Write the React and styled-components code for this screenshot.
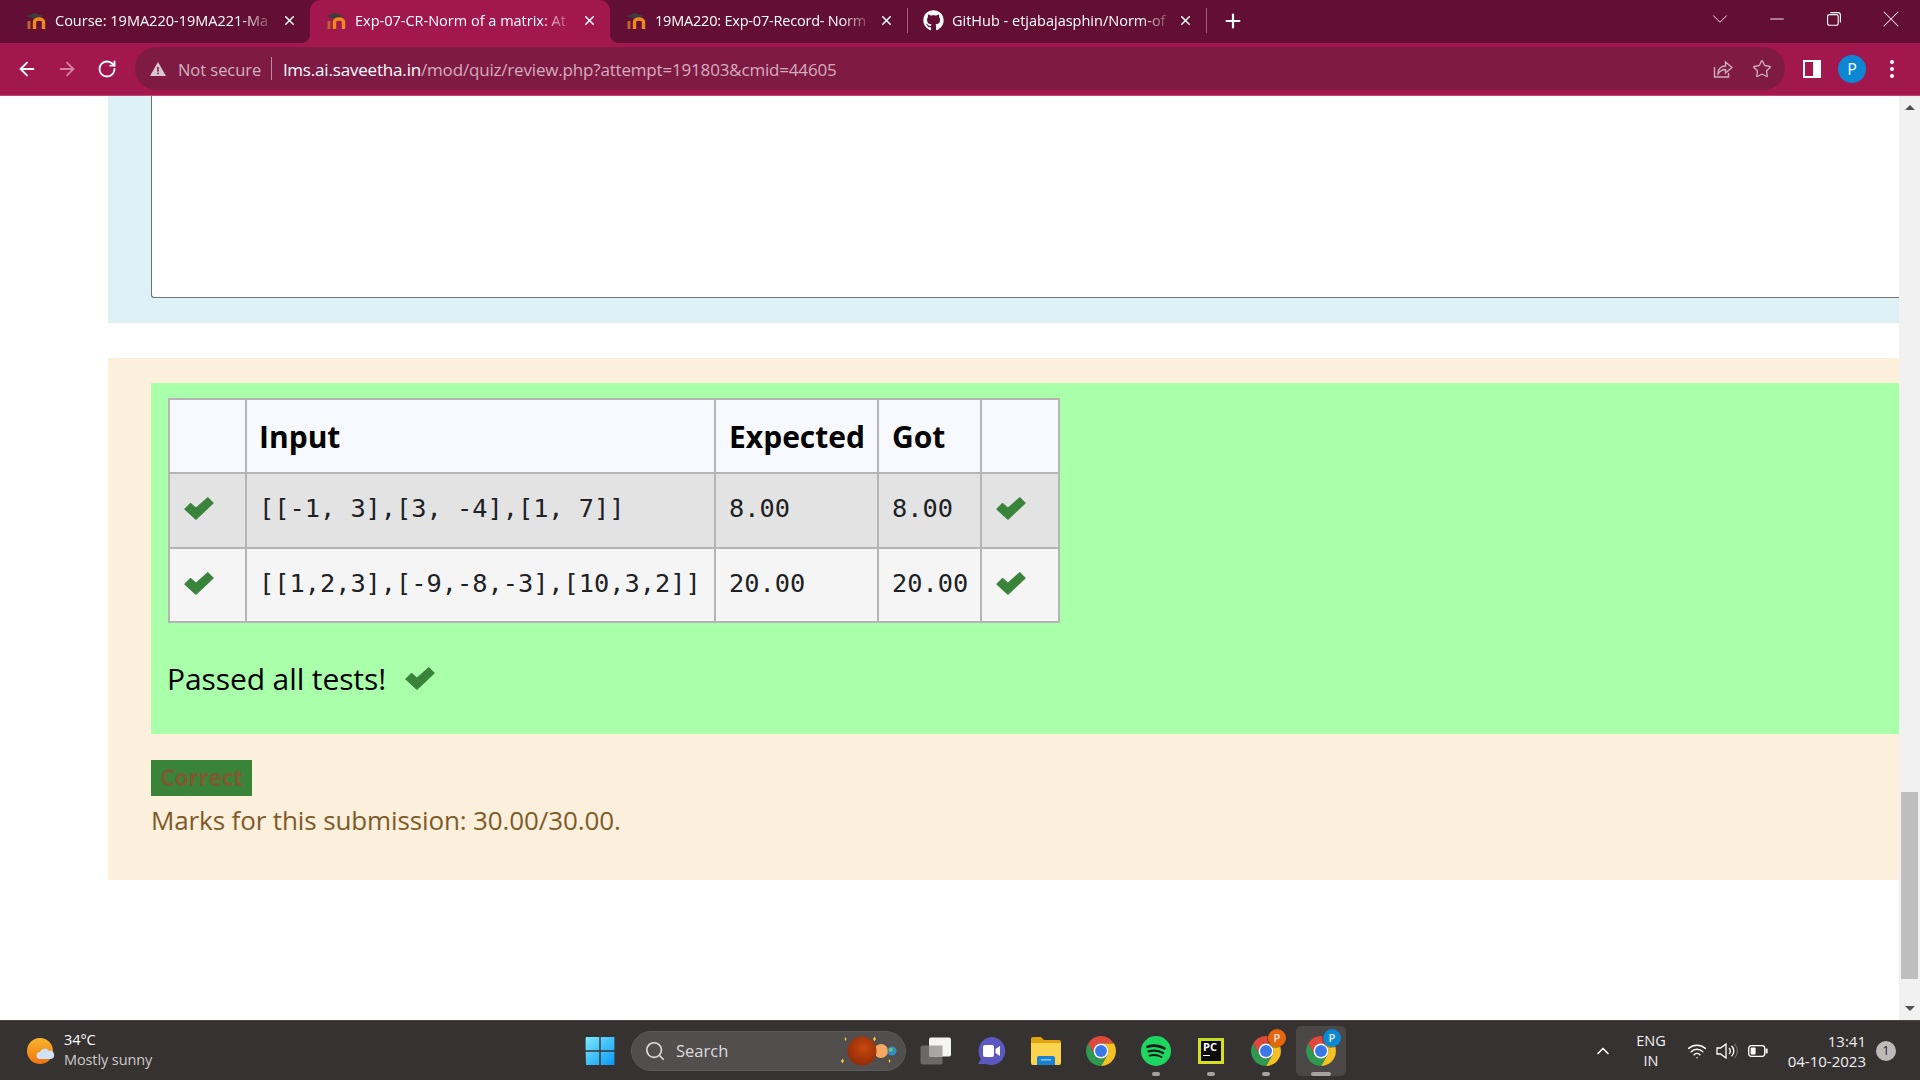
import React from 'react';
import styled, {createGlobalStyle} from 'styled-components';
import {FaGithub} from 'react-icons/fa';
import {ArrowLeft, ArrowRight, RotateCw, Star, Plus, X, ChevronDown, ChevronUp, Minus, Search, Wifi} from 'lucide-react';

const UI_FONT = '"Open Sans", "Noto Sans", sans-serif';

const GlobalStyle = createGlobalStyle`
html, body { margin: 0; padding: 0; background: #fff; overflow: hidden; }
* { box-sizing: border-box; }
body { font-family: ${UI_FONT}; }
`;

const Screen = styled.div`
width: 1920px;
height: 1080px;
display: flex;
flex-direction: column;
overflow: hidden;
`;

/* browser tab strip */
const TabStrip = styled.div`
height: 43px;
background: #630e34;
display: flex;
align-items: stretch;
padding-left: 10px;
flex: none;
`;

const Tab = styled.div`
position: relative;
width: ${p => p.$width}px;
display: flex;
align-items: center;
padding: 0 13px 2px 15px;
gap: 8px;
color: #fff;
border-radius: 10px 10px 0 0;
background: ${p => (p.$active ? '#a3174f' : 'transparent')};
svg:last-child { margin-left: auto; }
${p => p.$active && `
&::before, &::after {
  content: "";
  position: absolute;
  bottom: 0;
  width: 10px;
  height: 10px;
}
&::before { left: -10px; background: radial-gradient(circle at 0 0, transparent 10px, #a3174f 10.5px); }
&::after { right: -10px; background: radial-gradient(circle at 100% 0, transparent 10px, #a3174f 10.5px); }
`}
`;

const TabTitle = styled.span`
flex: none;
font-size: 14.5px;
letter-spacing: ${p => (p.$tight ? '-0.2px' : '0')};
white-space: nowrap;
-webkit-mask-image: linear-gradient(to right, #000 88%, rgba(0, 0, 0, .25) 100%);
mask-image: linear-gradient(to right, #000 88%, rgba(0, 0, 0, .25) 100%);
`;

const TabDivider = styled.div`
width: 1px;
height: 25px;
align-self: center;
margin-top: -2px;
background: #a8607f;
flex: none;
`;

const NewTab = styled.div`
width: 52px;
display: flex;
align-items: center;
justify-content: center;
color: #fff;
padding-bottom: 2px;
flex: none;
`;

const WindowControls = styled.div`
margin-left: auto;
display: flex;
align-items: center;
padding-bottom: 6px;
color: #f2dfe7;
`;

const WindowButton = styled.div`
width: ${p => p.$width || 57}px;
display: flex;
justify-content: center;
`;

/* toolbar with the address bar */
const Toolbar = styled.div`
height: 53px;
background: #a3174f;
border-bottom: 1px solid #c0447a;
display: flex;
align-items: center;
padding: 0 0 1px 7px;
flex: none;
`;

const NavButton = styled.div`
width: 40px;
display: flex;
justify-content: center;
align-items: center;
color: ${p => (p.$dim ? '#d57fa3' : '#fff')};
flex: none;
`;

const AddressBar = styled.div`
width: 1650px;
height: 43px;
margin: 0 7px 0 8px;
background: #7f1a45;
border-radius: 22px;
display: flex;
align-items: center;
padding: 0 13px 0 14px;
flex: none;
`;

const NotSecure = styled.span`
color: #cfb3bf;
font-size: 16.5px;
letter-spacing: -0.05px;
margin: 1px 0 0 11px;
`;

const AddressDivider = styled.div`
width: 1px;
height: 23px;
background: #b98aa0;
margin: 0 11px 0 10px;
`;

const Url = styled.div`
font-size: 17px;
letter-spacing: -0.18px;
margin-top: 1px;
color: #d4adbe;
white-space: nowrap;
flex: 1;
b { font-weight: 400; color: #fff; }
`;

const BarIcons = styled.div`
display: flex;
align-items: center;
gap: 19px;
color: #cbb0bc;
`;

const Avatar = styled.div`
width: 28px;
height: 28px;
border-radius: 50%;
background: #0b87d4;
color: #fff;
font-size: 16px;
display: flex;
align-items: center;
justify-content: center;
`;

const MenuDots = styled.div`
display: flex;
flex-direction: column;
gap: 3px;
span { width: 4px; height: 4px; border-radius: 50%; background: #fff; }
`;

/* page area */
const PageArea = styled.div`
flex: 1;
min-height: 0;
display: flex;
background: #fff;
`;

const Content = styled.main`
flex: 1;
min-width: 0;
padding-left: 108px;
`;

const InfoPanel = styled.section`
height: 227px;
background: #def1f7;
padding: 0 0 25px 43px;
`;

const AnswerBox = styled.div`
height: 100%;
background: #fff;
border-left: 1px solid #6f6f6f;
border-bottom: 1px solid #6f6f6f;
border-bottom-left-radius: 3px;
`;

const FeedbackPanel = styled.section`
margin-top: 35px;
height: 522px;
background: #fcefdc;
padding: 25px 0 0 43px;
`;

const ResultBox = styled.div`
height: 351px;
background: #aaffaa;
padding: 15px 0 0 17px;
`;

const ResultTable = styled.table`
width: 890px;
table-layout: fixed;
border-collapse: collapse;
`;

const HeadCell = styled.th`
height: 74px;
border: 2px solid #b5b5b5;
background: #f8f9ff;
text-align: left;
padding: 0 0 0 ${p => p.$pad || 13}px;
font-size: 30px;
font-weight: 700;
color: #000;
`;

const Row = styled.tr`
height: ${p => (p.$odd ? 75 : 74)}px;
background: ${p => (p.$odd ? '#e3e3e3' : '#f5f5f5')};
`;

const CodeCell = styled.td`
border: 2px solid #b5b5b5;
padding: 0 0 4px ${p => p.$pad || 13}px;
font-family: "DejaVu Sans Mono", "Liberation Mono", monospace;
font-size: 25.3px;
white-space: nowrap;
color: #1d2125;
`;

const MarkCell = styled.td`
border: 2px solid #b5b5b5;
padding: 0 0 4px 14px;
line-height: 0;
color: #3a833a;
`;

const Passed = styled.div`
display: flex;
align-items: center;
gap: 19px;
height: 42px;
margin-top: 34px;
margin-left: -1px;
font-size: 30px;
letter-spacing: -0.1px;
color: #000;
svg { color: #3a833a; }
`;

const Badge = styled.div`
width: 101px;
height: 36px;
margin-top: 26px;
background: #398439;
color: #7e5a31;
font-size: 23px;
font-weight: 700;
letter-spacing: -0.4px;
line-height: 35px;
text-align: center;
`;

const Marks = styled.div`
font-size: 26px;
letter-spacing: -0.12px;
line-height: 48px;
color: #7f5a29;
`;

/* scrollbar */
const Scrollbar = styled.div`
width: 21px;
background: #f1f1f1;
display: flex;
flex-direction: column;
align-items: center;
flex: none;
`;

const ScrollArrow = styled.div`
width: 0;
height: 0;
margin: ${p => (p.$down ? '27px 0 9px' : '9px 0 0')};
border-left: 5px solid transparent;
border-right: 5px solid transparent;
${p => (p.$down ? 'border-top: 5px solid #505050;' : 'border-bottom: 5px solid #505050;')}
`;

const ScrollThumb = styled.div`
width: 17px;
height: 187px;
margin-top: 682px;
background: #bebebe;
`;

/* windows taskbar */
const Taskbar = styled.footer`
height: 60px;
background: #363231;
border-top: 1px solid #4a4645;
display: flex;
align-items: center;
flex: none;
color: #fff;
`;

const Weather = styled.div`
width: 572px;
padding-left: 26px;
display: flex;
align-items: center;
gap: 8px;
flex: none;
`;

const WeatherText = styled.div`
font-size: 14.5px;
line-height: 20px;
letter-spacing: -0.1px;
margin-top: -2px;
span { display: block; }
span + span { color: #cdcbcb; }
`;

const TaskItem = styled.div`
position: relative;
width: ${p => (p.$active ? 50 : 55)}px;
height: 50px;
margin: ${p => (p.$active ? '0 2.5px' : '0')};
display: flex;
align-items: center;
justify-content: center;
flex: none;
border-radius: 5px;
background: ${p => (p.$active ? '#4a4746' : 'transparent')};
`;

const RunDot = styled.span`
position: absolute;
left: 50%;
bottom: 0;
transform: translateX(-50%);
width: ${p => (p.$wide ? 20 : 8)}px;
height: 4px;
border-radius: 2px;
background: #a5a3a2;
`;

const ProfilePip = styled.span`
position: absolute;
top: 3px;
left: 50%;
margin-left: 2px;
width: 18px;
height: 18px;
border-radius: 50%;
background: ${p => p.$color};
color: #eee;
font-size: 11px;
font-weight: 600;
line-height: 18px;
text-align: center;
box-shadow: -1px 1px 0 rgba(0, 0, 0, .3);
`;

const SearchPill = styled.div`
width: 275px;
height: 40px;
margin: 0 2.5px 0 4px;
border-radius: 20px;
background: #514e4d;
border: 1px solid #5c5958;
display: flex;
align-items: center;
padding: 0 7px 0 12px;
color: #dcdcdc;
font-size: 16.5px;
flex: none;
span { margin-left: 10px; flex: 1; }
`;

const Tray = styled.div`
margin-left: auto;
display: flex;
align-items: center;
padding-right: 24px;
`;

const TrayIcon = styled.div`
width: ${p => p.$width}px;
display: flex;
justify-content: center;
align-items: center;
color: #fff;
flex: none;
`;

const Lang = styled.div`
width: 52px;
text-align: center;
font-size: 14.5px;
line-height: 20px;
color: #f0f0f0;
flex: none;
margin-right: 5px;
`;

const Clock = styled.div`
width: 92px;
text-align: right;
font-size: 15px;
line-height: 20px;
color: #f0f0f0;
flex: none;
`;

const Notify = styled.div`
width: 20px;
height: 20px;
margin-left: 10px;
border-radius: 50%;
background: #bdbab9;
color: #222;
font-size: 12px;
text-align: center;
line-height: 20px;
flex: none;
`;

function CheckMark() {
    return (
        <svg width="30" height="23" viewBox="0 0 88 68" fill="currentColor" stroke="currentColor" strokeWidth="3" strokeLinejoin="round">
            <path d="M2 36 L19 19 L35 33 L70 2 L86 18 L35 66Z"/>
        </svg>
    );
}

function MoodleIcon() {
    return (
        <svg width="22" height="20" viewBox="0 0 22 20" fill="none">
            <path d="M1 5 L10 2 L19 5 L10 8Z" fill="#3c3c3c"/>
            <path d="M4 18 V10" stroke="#b9662a" strokeWidth="3"/>
            <path d="M9.5 18 V11 C9.5 7 18.5 7 18.5 11 V18" stroke="#f08a1d" strokeWidth="3.4"/>
        </svg>
    );
}

function WarningIcon() {
    return (
        <svg width="18" height="16" viewBox="0 0 18 16">
            <path d="M9 1 L17 15 H1Z" fill="#d9c7cf"/>
            <rect x="8.2" y="6" width="1.6" height="4.6" fill="#7f1a45"/>
            <rect x="8.2" y="11.6" width="1.6" height="1.6" fill="#7f1a45"/>
        </svg>
    );
}

function ShareIcon() {
    return (
        <svg width="20" height="20" viewBox="0 0 20 20" fill="none" stroke="#cbb0bc" strokeWidth="1.4">
            <path d="M1.5 8 V18 H15.5 V14"/>
            <path d="M5 15 C5 9 9 7 12.5 7 V3 L19 8.5 L12.5 14 V10.5 C9 10.5 7 12 5 15Z"/>
        </svg>
    );
}

function RestoreIcon() {
    return (
        <svg width="14" height="14" viewBox="0 0 14 14" fill="none" stroke="#fff" strokeWidth="1.1">
            <rect x="0.6" y="2.6" width="10.6" height="10.6" rx="2"/>
            <path d="M3.4 0.6 H11 a2.4 2.4 0 0 1 2.4 2.4 V10.6"/>
        </svg>
    );
}

function SidePanelIcon() {
    return (
        <svg width="18" height="18" viewBox="0 0 18 18">
            <rect width="18" height="18" fill="#fff"/>
            <rect x="2" y="2" width="8" height="14" fill="#a3174f"/>
        </svg>
    );
}

function WeatherIcon() {
    return (
        <svg width="30" height="30" viewBox="0 0 30 30">
            <defs>
                <linearGradient id="sun" x1="0" y1="0" x2="0" y2="1">
                    <stop offset="0" stopColor="#f7b52c"/>
                    <stop offset="1" stopColor="#f1750f"/>
                </linearGradient>
            </defs>
            <circle cx="14" cy="15" r="13" fill="url(#sun)"/>
            <path d="M13 23 a3.6 3.6 0 0 1 1 -7 a5 5 0 0 1 9 -1 a4 4 0 0 1 2 8Z" fill="#cfe2f7"/>
        </svg>
    );
}

function WindowsLogo() {
    return (
        <svg width="30" height="30" viewBox="0 0 30 30">
            <defs>
                <linearGradient id="win" x1="0" y1="0" x2="1" y2="1">
                    <stop offset="0" stopColor="#7de8ff"/>
                    <stop offset="1" stopColor="#0a98f5"/>
                </linearGradient>
            </defs>
            <path d="M1 1 H14.3 V14.3 H0.6 V2Z M15.7 1 H29.4 V14.3 H15.7Z M0.6 15.7 H14.3 V29 H1Z M15.7 15.7 H29.4 V29 H15.7Z" fill="url(#win)"/>
        </svg>
    );
}

function PlanetsIcon() {
    return (
        <svg width="60" height="32" viewBox="0 0 60 32">
            <defs>
                <radialGradient id="mars" cx="0.55" cy="0.4" r="0.65">
                    <stop offset="0" stopColor="#c8470f"/>
                    <stop offset="1" stopColor="#8f2a06"/>
                </radialGradient>
            </defs>
            <circle cx="43" cy="16" r="7" fill="#f5a864"/>
            <circle cx="54" cy="16" r="4.5" fill="#2f8fc4"/>
            <circle cx="52.8" cy="14.8" r="2" fill="#6fc06a"/>
            <circle cx="24" cy="16" r="14.5" fill="url(#mars)"/>
            <path d="M3 26 l1.5 -2.5 l1.5 2.5 l-1.5 2.5Z M6.5 4 l1 -2 l1 2 l-1 2Z M35 4 l1.5 -2.5 l1.5 2.5 l-1.5 2.5Z M50.5 26 l1 -2 l1 2 l-1 2Z" fill="#f1c63a"/>
        </svg>
    );
}

function TaskViewIcon() {
    return (
        <svg width="32" height="28" viewBox="0 0 32 28">
            <rect x="0.5" y="8.5" width="22" height="19" rx="2" fill="#6b6867"/>
            <rect x="9" y="0.5" width="22" height="19" rx="2" fill="#f4f4f4"/>
            <rect x="9" y="8.5" width="13.5" height="11" fill="#a9a7a6"/>
        </svg>
    );
}

function ChatIcon() {
    return (
        <svg width="30" height="30" viewBox="0 0 30 30">
            <path d="M15 1 a14 14 0 1 1 -5 27 H2 l3 -5 A14 14 0 0 1 15 1Z" fill="#5d58c0"/>
            <rect x="7" y="9" width="11" height="12" rx="2" fill="#fff"/>
            <path d="M19.5 13 L24 10 V20 L19.5 17Z" fill="#fff"/>
        </svg>
    );
}

function FolderIcon() {
    return (
        <svg width="30" height="28" viewBox="0 0 30 28">
            <path d="M0 2 a2 2 0 0 1 2 -2 H10 L13 3 H28 a2 2 0 0 1 2 2 V8 H0Z" fill="#e2a312"/>
            <path d="M0 6 H30 V26 a2 2 0 0 1 -2 2 H2 a2 2 0 0 1 -2 -2Z" fill="#fbd44f"/>
            <path d="M6 28 V21 a2 2 0 0 1 2 -2 H22 a2 2 0 0 1 2 2 V28Z" fill="#1a81d0"/>
            <rect x="10" y="22" width="10" height="1.6" fill="#7cc1f0"/>
        </svg>
    );
}

function ChromeIcon() {
    return (
        <svg width="30" height="30" viewBox="4 4 40 40">
            <path d="M6.68 14 A20 20 0 0 1 41.32 14 H24 A10 10 0 0 0 15.34 29Z" fill="#dd4a3d"/>
            <path d="M41.32 14 A20 20 0 0 1 24 44 L32.66 29 A10 10 0 0 0 24 14Z" fill="#f4c022"/>
            <path d="M24 44 A20 20 0 0 1 6.68 14 L15.34 29 A10 10 0 0 0 32.66 29Z" fill="#2f9a4f"/>
            <circle cx="24" cy="24" r="10" fill="#fff"/>
            <circle cx="24" cy="24" r="8" fill="#3b78e7"/>
        </svg>
    );
}

function SpotifyIcon() {
    return (
        <svg width="30" height="30" viewBox="0 0 30 30" fill="none" stroke="#1a1a1a" strokeLinecap="round">
            <circle cx="15" cy="15" r="15" fill="#1ed760" stroke="none"/>
            <path d="M6.5 10.8 C12 9 18.5 9.6 23.5 12.4" strokeWidth="2.6"/>
            <path d="M7.5 15.4 C12.5 14 18 14.6 22 17" strokeWidth="2.2"/>
            <path d="M8.5 19.6 C12.5 18.6 17 19 20.5 21" strokeWidth="1.8"/>
        </svg>
    );
}

const PyCharmTile = styled.div`
width: 26px;
height: 26px;
background: #0c0c0c;
border: 3px solid #d6e021;
border-top-color: #c4dc22;
color: #fff;
font-size: 11px;
font-weight: 700;
line-height: 12px;
padding: 0 0 0 2px;
&::after {
  content: "";
  display: block;
  width: 7px;
  height: 1.5px;
  margin-top: 2px;
  background: #fff;
}
`;

function SpeakerIcon() {
    return (
        <svg width="22" height="18" viewBox="0 0 22 18" fill="none" stroke="#fff" strokeWidth="1.3">
            <path d="M1 6 H4.5 L10 2 V16 L4.5 12 H1Z"/>
            <path d="M13 6 a4 4 0 0 1 0 6"/>
            <path d="M15.5 3.8 a7 7 0 0 1 0 10.4"/>
            <path d="M18.5 2 a10 10 0 0 1 0 14" stroke="#6b6766"/>
        </svg>
    );
}

function BatteryIcon() {
    return (
        <svg width="20" height="12" viewBox="0 0 20 12" fill="none">
            <rect x="0.7" y="0.7" width="16" height="10.6" rx="2.5" stroke="#fff" strokeWidth="1.3"/>
            <rect x="2.6" y="2.6" width="5" height="6.8" rx="1" fill="#fff"/>
            <rect x="17.6" y="3.6" width="2" height="4.8" fill="#fff"/>
        </svg>
    );
}

const TABS = [
    {title: 'Course: 19MA220-19MA221-Ma', width: 300},
    {title: 'Exp-07-CR-Norm of a matrix: At', width: 300, active: true},
    {title: '19MA220: Exp-07-Record- Norm', width: 297, divider: true, tight: true},
    {title: 'GitHub - etjabajasphin/Norm-of', width: 298, divider: true, github: true},
];

const ROWS = [
    {input: '[[-1, 3],[3, -4],[1, 7]]', expected: '8.00', got: '8.00'},
    {input: '[[1,2,3],[-9,-8,-3],[10,3,2]]', expected: '20.00', got: '20.00'},
];

function App() {
    return (
        <Screen>
            <GlobalStyle/>
            <TabStrip>
                {TABS.map(tab => (
                    <React.Fragment key={tab.title}>
                        <Tab $active={tab.active} $width={tab.width}>
                            {tab.github ? <FaGithub size={21} color="#fff"/> : <MoodleIcon/>}
                            <TabTitle $tight={tab.tight}>{tab.title}</TabTitle>
                            <X size={15} strokeWidth={2.4}/>
                        </Tab>
                        {tab.divider && <TabDivider/>}
                    </React.Fragment>
                ))}
                <NewTab><Plus size={22} strokeWidth={2.4}/></NewTab>
                <WindowControls>
                    <WindowButton><ChevronDown size={26} strokeWidth={0.9}/></WindowButton>
                    <WindowButton><Minus size={22} strokeWidth={1.1}/></WindowButton>
                    <WindowButton><RestoreIcon/></WindowButton>
                    <WindowButton $width={58}><X size={28} strokeWidth={0.9}/></WindowButton>
                </WindowControls>
            </TabStrip>
            <Toolbar>
                <NavButton><ArrowLeft size={22} strokeWidth={2}/></NavButton>
                <NavButton $dim><ArrowRight size={22} strokeWidth={2}/></NavButton>
                <NavButton><RotateCw size={20} strokeWidth={2.2}/></NavButton>
                <AddressBar>
                    <WarningIcon/>
                    <NotSecure>Not secure</NotSecure>
                    <AddressDivider/>
                    <Url><b>lms.ai.saveetha.in</b>/mod/quiz/review.php?attempt=191803&amp;cmid=44605</Url>
                    <BarIcons>
                        <ShareIcon/>
                        <Star size={20} strokeWidth={1.6}/>
                    </BarIcons>
                </AddressBar>
                <NavButton><SidePanelIcon/></NavButton>
                <NavButton><Avatar>P</Avatar></NavButton>
                <NavButton><MenuDots><span/><span/><span/></MenuDots></NavButton>
            </Toolbar>
            <PageArea>
                <Content>
                    <InfoPanel>
                        <AnswerBox/>
                    </InfoPanel>
                    <FeedbackPanel>
                        <ResultBox>
                            <ResultTable>
                                <colgroup>
                                    <col width="77"/>
                                    <col width="469"/>
                                    <col width="163"/>
                                    <col width="103"/>
                                    <col width="78"/>
                                </colgroup>
                                <thead>
                                    <tr>
                                        <HeadCell/>
                                        <HeadCell $pad={12}>Input</HeadCell>
                                        <HeadCell>Expected</HeadCell>
                                        <HeadCell>Got</HeadCell>
                                        <HeadCell/>
                                    </tr>
                                </thead>
                                <tbody>
                                    {ROWS.map((row, i) => (
                                        <Row key={row.input} $odd={i === 0}>
                                            <MarkCell><CheckMark/></MarkCell>
                                            <CodeCell $pad={12}>{row.input}</CodeCell>
                                            <CodeCell>{row.expected}</CodeCell>
                                            <CodeCell>{row.got}</CodeCell>
                                            <MarkCell><CheckMark/></MarkCell>
                                        </Row>
                                    ))}
                                </tbody>
                            </ResultTable>
                            <Passed>Passed all tests! <CheckMark/></Passed>
                        </ResultBox>
                        <Badge>Correct</Badge>
                        <Marks>Marks for this submission: 30.00/30.00.</Marks>
                    </FeedbackPanel>
                </Content>
                <Scrollbar>
                    <ScrollArrow/>
                    <ScrollThumb/>
                    <ScrollArrow $down/>
                </Scrollbar>
            </PageArea>
            <Taskbar>
                <Weather>
                    <WeatherIcon/>
                    <WeatherText>
                        <span>34°C</span>
                        <span>Mostly sunny</span>
                    </WeatherText>
                </Weather>
                <TaskItem><WindowsLogo/></TaskItem>
                <SearchPill>
                    <Search size={22} strokeWidth={1.8}/>
                    <span>Search</span>
                    <PlanetsIcon/>
                </SearchPill>
                <TaskItem><TaskViewIcon/></TaskItem>
                <TaskItem><ChatIcon/></TaskItem>
                <TaskItem><FolderIcon/></TaskItem>
                <TaskItem><ChromeIcon/></TaskItem>
                <TaskItem><SpotifyIcon/><RunDot/></TaskItem>
                <TaskItem><PyCharmTile>PC</PyCharmTile><RunDot/></TaskItem>
                <TaskItem><ChromeIcon/><ProfilePip $color="#e8660c">P</ProfilePip><RunDot/></TaskItem>
                <TaskItem $active><ChromeIcon/><ProfilePip $color="#0b87d4">P</ProfilePip><RunDot $wide/></TaskItem>
                <Tray>
                    <TrayIcon $width={44}><ChevronUp size={20} strokeWidth={2}/></TrayIcon>
                    <Lang>ENG<br/>IN</Lang>
                    <TrayIcon $width={30}><Wifi size={20} strokeWidth={1.8}/></TrayIcon>
                    <TrayIcon $width={30}><SpeakerIcon/></TrayIcon>
                    <TrayIcon $width={32}><BatteryIcon/></TrayIcon>
                    <Clock>13:41<br/>04-10-2023</Clock>
                    <Notify>1</Notify>
                </Tray>
            </Taskbar>
        </Screen>
    );
}

export default App;
